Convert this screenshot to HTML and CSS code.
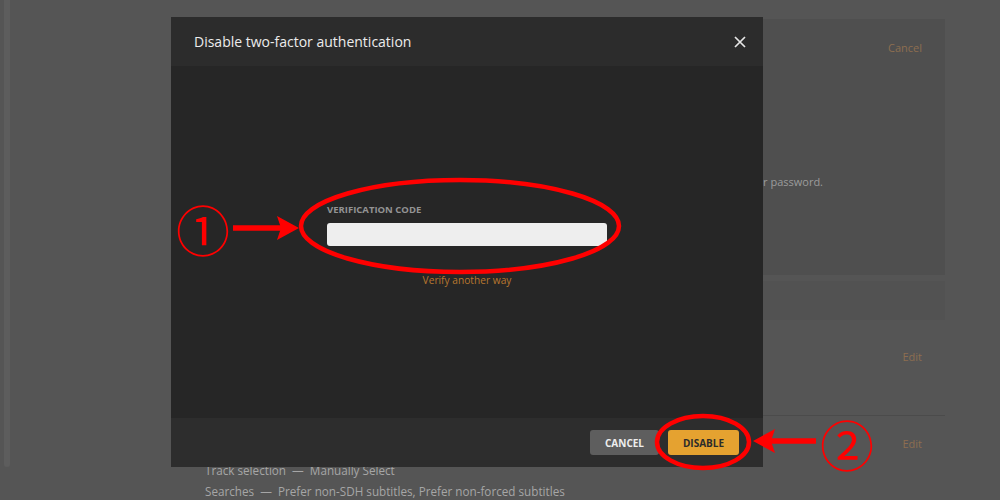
FILE: index.html
```html
<!DOCTYPE html>
<html lang="en">
<head>
<meta charset="utf-8">
<title>Disable two-factor authentication</title>
<link rel="stylesheet" href="styles.css">
</head>
<body>
<div class="page">
  <div class="rail"></div>
  <main class="main">
    <section class="card card-security">
      <div class="card-head">
        <a class="link">Cancel</a>
      </div>
      <p class="card-text">Enter a code from your authenticator app along with your password.</p>
    </section>
    <section class="card card-second"></section>
    <section class="row row-first">
      <a class="link">Edit</a>
    </section>
    <section class="row row-second">
      <div class="details">
        <div>Track selection &nbsp;—&nbsp; Manually Select</div>
        <div>Searches &nbsp;—&nbsp; Prefer non-SDH subtitles, Prefer non-forced subtitles</div>
      </div>
      <a class="link">Edit</a>
    </section>
  </main>
</div>

<div class="modal">
  <header class="modal-head">
    <h1 class="modal-title">Disable two-factor authentication</h1>
    <button class="close" aria-label="Close">
      <svg width="12" height="12" viewBox="0 0 12 12"><path d="M1 1L11 11M11 1L1 11" stroke="#e6e6e6" stroke-width="1.7" fill="none"/></svg>
    </button>
  </header>
  <div class="modal-body">
    <form class="form">
      <label class="label">VERIFICATION CODE</label>
      <input class="input" type="text">
      <a class="alt-link">Verify another way</a>
    </form>
  </div>
  <footer class="modal-foot">
    <button class="btn btn-cancel">CANCEL</button>
    <button class="btn btn-disable">DISABLE</button>
  </footer>
</div>

<div class="annot">
  <svg class="annot-svg" width="1000" height="500" viewBox="0 0 1000 500">
    <ellipse cx="460" cy="226" rx="159" ry="46" fill="none" stroke="#ff0000" stroke-width="4.5"/>
    <path d="M233 228H282" stroke="#ff0000" stroke-width="5.5" fill="none"/>
    <path d="M299 228L277 216L281 228L277 240Z" fill="#ff0000"/>
    <ellipse cx="703" cy="442" rx="46" ry="26" fill="none" stroke="#ff0000" stroke-width="4.5"/>
    <path d="M816 441H770" stroke="#ff0000" stroke-width="5.5" fill="none"/>
    <path d="M753 441L775 429L771 441L775 453Z" fill="#ff0000"/>
  </svg>
  <span class="num num-1">①</span>
  <span class="num num-2">②</span>
</div>
</body>
</html>
```
FILE: styles.css
```css
* { box-sizing: border-box; }
html, body { margin: 0; padding: 0; }
body {
  width: 1000px;
  height: 500px;
  overflow: hidden;
  background: #555555;
  font-family: "Open Sans", "Liberation Sans", sans-serif;
  position: relative;
}
.page { display: flex; height: 500px; }
.rail {
  width: 6px;
  height: 467px;
  margin-left: 4px;
  background: #5d5d5d;
  border-radius: 0 0 3px 3px;
  flex: none;
}
.main {
  margin-left: 170px;
  width: 765px;
  flex: none;
  display: flex;
  flex-direction: column;
}
.link {
  color: #8d6e50;
  font-size: 11px;
  line-height: 16px;
}
.card { background: #4f4f4f; }
.card-security {
  margin-top: 19px;
  height: 256px;
  padding: 21px 23px 0 25px;
  flex: none;
}
.card-head {
  display: flex;
  justify-content: flex-end;
  align-items: center;
}
.card-text {
  margin: 118px 99px 0 0;
  text-align: right;
  color: #9c9c9c;
  font-size: 11px;
  line-height: 16px;
}
.card-second {
  margin-top: 6px;
  height: 39px;
  flex: none;
  background: #525252;
}
.row {
  display: flex;
  justify-content: space-between;
  align-items: flex-start;
  padding: 0 23px 0 25px;
  flex: none;
}
.row-first {
  height: 96px;
  padding-top: 29px;
  border-bottom: 1px solid #4b4b4b;
  justify-content: flex-end;
}
.row-second { padding-top: 20px; }
.details {
  margin-top: 24px;
  color: #a6a6a6;
  font-size: 11.7px;
  line-height: 21px;
}

/* Modal */
.modal {
  position: absolute;
  left: 171px;
  top: 17px;
  width: 592px;
  height: 450px;
  display: flex;
  flex-direction: column;
  background: #262626;
}
.modal-head {
  height: 49px;
  background: #2c2c2c;
  display: flex;
  align-items: center;
  justify-content: space-between;
  padding: 0 17px 0 23px;
  flex: none;
}
.modal-title {
  margin: 0;
  font-weight: 400;
  font-size: 14px;
  color: #ececec;
}
.close {
  background: none;
  border: 0;
  padding: 0;
  width: 12px;
  height: 12px;
  display: flex;
}
.modal-body {
  flex: 1;
  display: flex;
  align-items: center;
  justify-content: center;
}
.form {
  width: 280px;
  display: flex;
  flex-direction: column;
  margin-top: 5px;
}
.label {
  font-size: 9.5px;
  font-weight: 700;
  color: #939393;
  line-height: 13px;
}
.input {
  margin-top: 7px;
  height: 23px;
  border: 0;
  border-radius: 3px;
  background: #eeeeee;
}
.alt-link {
  margin-top: 27px;
  text-align: center;
  color: #b8772f;
  font-size: 10.2px;
  line-height: 14px;
}
.modal-foot {
  height: 49px;
  flex: none;
  background: #2d2d2d;
  display: flex;
  justify-content: flex-end;
  align-items: center;
  gap: 9px;
  padding: 0 24px 0 0;
}
.btn {
  height: 25px;
  border: 0;
  border-radius: 3px;
  font-family: "Open Sans", "Liberation Sans", sans-serif;
  font-weight: 700;
  font-size: 10px;
  padding: 0;
}
.btn-cancel { width: 69px; background: #5e5e5e; color: #eeeeee; }
.btn-disable { width: 71px; background: #e5a230; color: #2b2b2b; }

/* Annotations */
.annot {
  position: absolute;
  left: 0;
  top: 0;
  width: 1000px;
  height: 500px;
  pointer-events: none;
}
.annot-svg { position: absolute; left: 0; top: 0; }
.num {
  position: absolute;
  color: #ff0000;
  font-family: "Noto Sans CJK JP", "DejaVu Sans", sans-serif;
  font-size: 54px;
  line-height: 1;
}
.num-1 { left: 176px; top: 202px; }
.num-2 { left: 820px; top: 417px; }
```
